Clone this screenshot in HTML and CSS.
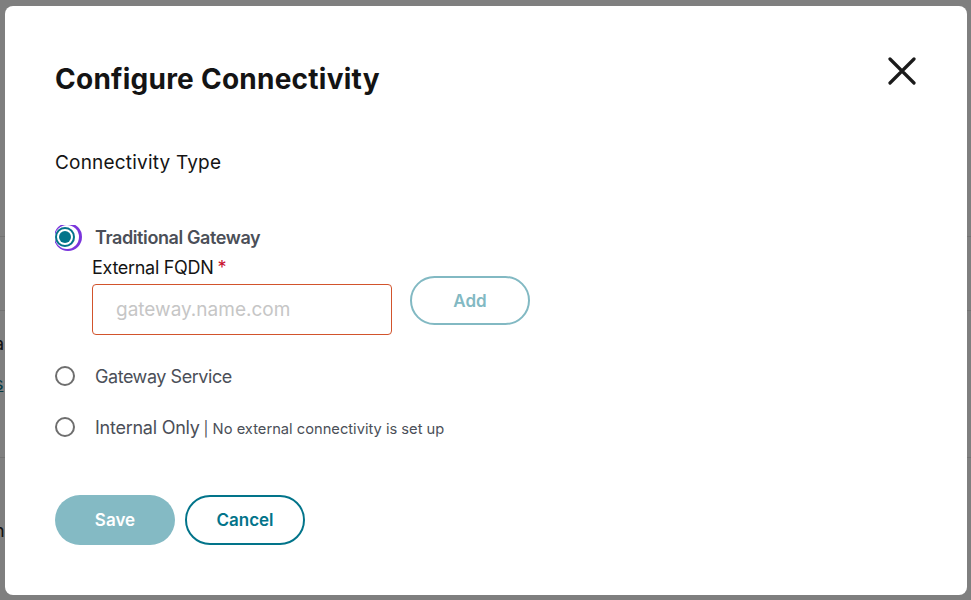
FILE: index.html
```html
<!DOCTYPE html>
<html lang="en">
<head>
  <meta charset="UTF-8">
  <meta name="viewport" content="width=device-width, initial-scale=1">
  <title>Configure Connectivity</title>
  <link rel="stylesheet" href="styles.css">
</head>
<body>

<div class="page">
  <div class="page-row row-a"></div>
  <div class="page-row row-b"></div>
  <div class="page-row row-c">
    <span class="edge">a</span>
    <span class="edge link">s</span>
  </div>
  <div class="page-row row-d">
    <span class="edge">n</span>
  </div>
</div>

<div class="overlay"></div>

<div class="modal">
  <div class="modal-header">
    <h1>Configure Connectivity</h1>
    <button class="close" aria-label="Close">
      <svg width="28" height="28" viewBox="0 0 28 28">
        <path d="M2 2 L26 26 M26 2 L2 26" stroke="#1a1a1a" stroke-width="3.2" stroke-linecap="round"/>
      </svg>
    </button>
  </div>

  <div class="section-label">Connectivity Type</div>

  <div class="options">
    <label class="option">
      <span class="radio checked"><span class="dot"></span></span>
      <span class="option-title strong">Traditional Gateway</span>
    </label>

    <div class="fqdn">
      <div class="field-label">External FQDN<span class="req">*</span></div>
      <div class="field-row">
        <input type="text" class="field" placeholder="gateway.name.com">
        <button class="btn btn-add">Add</button>
      </div>
    </div>

    <label class="option">
      <span class="radio"></span>
      <span class="option-title">Gateway Service</span>
    </label>

    <label class="option">
      <span class="radio"></span>
      <span class="option-title short">Internal Only</span>
      <span class="option-note">| No external connectivity is set up</span>
    </label>
  </div>

  <div class="actions">
    <button class="btn btn-save">Save</button>
    <button class="btn btn-cancel">Cancel</button>
  </div>
</div>

</body>
</html>
```

FILE: styles.css
```css
body {
  margin: 0;
  background-color: #ffffff;
  font-family: "Inter", "Liberation Sans", sans-serif;
  height: 600px;
  overflow: hidden;
}

/* page behind the dialog, only its left edge shows */
.page {
  display: flex;
  flex-direction: column;
}

.page-row {
  border-bottom: 1px solid #e4e4e4;
  box-sizing: border-box;
  display: flex;
  flex-direction: column;
}

.row-a { height: 237px; }
.row-b { height: 74px; }
.row-c { height: 147px; padding-top: 21px; gap: 16px; }
.row-d { height: 140px; padding-top: 61px; border-bottom: none; }

.edge {
  display: block;
  margin-left: -6px;
  font-size: 18px;
  line-height: 24px;
  color: #222;
}

.edge.link {
  color: #02748a;
  text-decoration: underline;
}

.overlay {
  position: fixed;
  inset: 0;
  background-color: rgba(0, 0, 0, 0.5);
}

.modal {
  position: fixed;
  left: 5px;
  top: 6px;
  width: 962px;
  height: 589px;
  box-sizing: border-box;
  background-color: #ffffff;
  border-radius: 8px;
  padding: 55px 51px 0 50px;
}

.modal-header {
  display: flex;
  justify-content: space-between;
  align-items: flex-start;
}

.modal-header h1 {
  margin: 0;
  font-size: 28px;
  line-height: 36px;
  font-weight: 700;
  color: #141414;
  letter-spacing: 0.25px;
}

.close {
  border: none;
  background: none;
  padding: 0;
  margin-top: -4px;
  width: 28px;
  height: 28px;
  cursor: pointer;
}

.section-label {
  margin-top: 52px;
  font-size: 19px;
  line-height: 28px;
  letter-spacing: 0.2px;
  color: #141414;
}

.options {
  margin-top: 48px;
  overflow: hidden;
}

.option {
  display: flex;
  align-items: center;
  height: 24px;
}

.radio {
  width: 20px;
  height: 20px;
  box-sizing: border-box;
  border: 2px solid #6e6e6e;
  border-radius: 50%;
  margin-right: 20px;
  flex-shrink: 0;
  display: flex;
  align-items: center;
  justify-content: center;
}

.radio.checked {
  border-color: #02748a;
  box-shadow: 2px 0 0 2px #ffffff, 3px 0 0 4px #7a35dc;
}

.radio .dot {
  width: 12px;
  height: 12px;
  border-radius: 50%;
  background-color: #02748a;
}

.option-title {
  font-size: 18px;
  color: #4b4f58;
  letter-spacing: -0.45px;
}

.option-title.strong {
  font-weight: 600;
  letter-spacing: -0.4px;
}

.option-title.short {
  letter-spacing: -0.25px;
}

.option-note {
  font-size: 14.7px;
  color: #4b4f58;
  margin-left: 4px;
  margin-top: 4px;
}

.fqdn {
  margin-top: 7px;
  padding-left: 37px;
}

.field-label {
  font-size: 18px;
  line-height: 24px;
  letter-spacing: -0.3px;
  color: #141414;
}

.req {
  color: #c8102e;
  margin-left: 4px;
}

.field-row {
  display: flex;
  align-items: flex-start;
}

.field {
  width: 300px;
  height: 51px;
  box-sizing: border-box;
  border: 1px solid #d2532c;
  border-radius: 4px;
  padding: 0 23px;
  font-family: inherit;
  font-size: 19px;
  color: #141414;
  margin-top: 4px;
}

.field::placeholder {
  color: #c6c6c6;
}

.btn {
  font-family: inherit;
  font-size: 17px;
  font-weight: 600;
  height: 50px;
  width: 120px;
  border-radius: 25px;
  cursor: pointer;
  box-sizing: border-box;
}

.btn-add {
  margin-left: 18px;
  margin-top: -4px;
  height: 49px;
  background-color: #ffffff;
  border: 2px solid #82b9c3;
  color: #82b9c3;
}

.options .option + .fqdn + .option {
  margin-top: 29px;
}

.options .option + .option {
  margin-top: 27px;
}

.actions {
  margin-top: 56px;
  display: flex;
  gap: 10px;
}

.btn-save {
  background-color: #84bac4;
  border: none;
  color: #ffffff;
}

.btn-cancel {
  background-color: #ffffff;
  border: 2px solid #02748a;
  color: #02748a;
}
```
